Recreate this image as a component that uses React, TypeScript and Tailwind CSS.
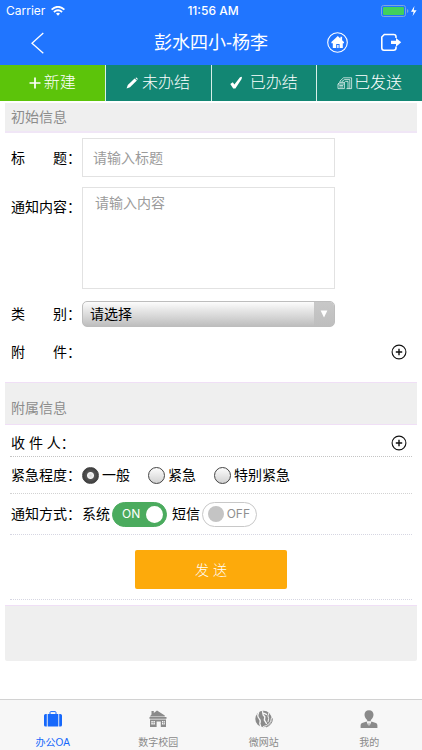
import { useState } from 'react';
import type { ReactNode } from 'react';

type TabId = 'new' | 'pending' | 'done' | 'sent';

interface TopTab {
  id: TabId;
  label: string;
  icon: ReactNode;
}

interface NavItem {
  id: string;
  label: string;
  icon: ReactNode;
}

const topTabs: TopTab[] = [
  {
    id: 'new',
    label: '新建',
    icon: (
      <svg className="w-3 h-3 mr-[3px]" viewBox="0 0 12 12" fill="none" stroke="currentColor" strokeWidth="1.7">
        <path d="M6 0.5v11M0.5 6h11" />
      </svg>
    ),
  },
  {
    id: 'pending',
    label: '未办结',
    icon: (
      <svg className="w-3 h-3 mr-1" viewBox="0 0 12 12" fill="currentColor">
        <path d="M8.6 1.5 10.9 3.6 4 10.2 0.6 11.6 1.8 8z" />
        <path d="M9.4 0.9 10.4 0.5 11.7 1.8 11.4 2.9z" />
      </svg>
    ),
  },
  {
    id: 'done',
    label: '已办结',
    icon: (
      <svg className="w-3 h-3.5 mr-2" viewBox="0 0 12 14" fill="currentColor">
        <path d="M0.3 8 2.8 6.2 4.4 8.6 10 1.2 12 0.8 11.6 3 5.4 12.6 3.2 12.6z" />
      </svg>
    ),
  },
  {
    id: 'sent',
    label: '已发送',
    icon: (
      <svg className="w-4 h-3.5 mr-px" viewBox="0 0 16 14" fill="none" stroke="currentColor" strokeWidth="0.7">
        <path d="M3 6.4V5L6.5 1.8H14.6v10.8H9.5M5 6V5.4L7.5 3.6H12.8v9M7.4 6.4 8.5 5.4H11v7.2" />
        <path d="M1 8h6.4v4.6H1zM2.3 9.5h3.8M2.3 11h3.8M1 8l1.8-1.6h4.6V8" />
      </svg>
    ),
  },
];

const navItems: NavItem[] = [
  {
    id: 'oa',
    label: '办公OA',
    icon: (
      <svg className="shrink-0 w-[18px] h-[18px]" viewBox="0 0 18 18" fill="currentColor">
        <path d="M6 4V2.6Q6 1.6 7 1.6h4q1 0 1 1V4" fill="none" stroke="currentColor" strokeWidth="1" />
        <path d="M3.7 4h10.6v12.5H3.7z" />
        <path d="M2.8 4v12.5H1.6Q0 16.5 0 15V5.5Q0 4 1.6 4zM15.2 4h1.2Q18 4 18 5.5V15q0 1.5-1.6 1.5h-1.2z" />
      </svg>
    ),
  },
  {
    id: 'campus',
    label: '数字校园',
    icon: (
      <svg className="shrink-0 w-[18px] h-[18px]" viewBox="0 0 18 18" fill="currentColor">
        <path d="M2.5 1h2.3v2L8 0.5 15.8 5.4V6.6H0.8L2.5 4.4z" />
        <path d="M0.5 7h17v1.8h-17z" />
        <path
          fillRule="evenodd"
          d="M1 9.4h16V17h-5.2v-5.6H7.6V17H1zM2.3 11v3.4h3.6V11zM13 11v3.4h2.8V11z"
        />
        <path d="M3.8 11h0.6v3.4h-0.6zM2.3 12.4h3.6v0.6H2.3zM14.1 11h0.6v3.4h-0.6zM13 12.4h2.8v0.6H13z" />
      </svg>
    ),
  },
  {
    id: 'site',
    label: '微网站',
    icon: (
      <svg className="shrink-0 w-[18px] h-[18px]" viewBox="0 0 18 18">
        <circle cx="8.5" cy="9" r="8.2" fill="currentColor" />
        <g fill="none" stroke="#f7f7f7" strokeLinecap="round">
          <path d="M3.6 2.6Q1.8 6 4 8.4q2 2 .8 5.2l1 3.2" strokeWidth="1.3" />
          <path d="M7.6 1.6 8.2 5l1.6 1.8-.4 3.4 2 3.2M9.2 3.4l2.2 1" strokeWidth="1.4" />
          <path d="M13.6 3.4q-1.4 2.6 0 5.2l-.6 3.2" strokeWidth="1" />
          <path d="M16.4 8.4q-.2 6.6-8.2 8.2" strokeWidth="0.9" />
        </g>
        <path d="M17.4 8.4Q17.4 14.8 11 17" fill="none" stroke="currentColor" strokeWidth="1" />
      </svg>
    ),
  },
  {
    id: 'me',
    label: '我的',
    icon: (
      <svg className="shrink-0 w-[18px] h-[18px]" viewBox="0 0 18 18" fill="currentColor">
        <path d="M9 0.2c2.9 0 4.5 2 4.5 4.5 0 2.1-1.3 4.1-2.7 5.3v1.2H7.2V10C5.8 8.8 4.5 6.8 4.5 4.7 4.5 2.2 6.1 0.2 9 0.2z" />
        <path d="M6.6 11.6 8.4 16 8.7 12.8h0.6L9.6 16l1.8-4.4 4.4 1.5q1.6.6 1.6 2.2V18H0.6v-2.7q0-1.6 1.6-2.2z" />
      </svg>
    ),
  },
];

const urgencyOptions = ['一般', '紧急', '特别紧急'];

function StatusBar() {
  return (
    <div className="relative flex items-center justify-between h-5 pl-1.5 pr-1 pt-0.5 font-['Inter',sans-serif] text-[12px]">
      <div className="flex items-center gap-1.5">
        <span>Carrier</span>
        <svg className="w-3.5 h-2.5" viewBox="0 0 14 10" fill="none" stroke="currentColor" strokeWidth="1.8">
          <path d="M0.6 3.6Q7-2 13.4 3.6" />
          <path d="M2.9 6Q7 2.6 11.1 6" />
          <path d="M5 7.6Q7 6 9 7.6L7 9.8z" fill="currentColor" stroke="none" />
        </svg>
      </div>
      <span className="absolute inset-x-0 pl-1 text-center font-medium">11:56 AM</span>
      <svg className="w-[37px] h-3" viewBox="0 0 37 12">
        <rect x="0.5" y="0.5" width="24" height="11" rx="2" fill="none" stroke="#7da6e0" />
        <rect x="2" y="2" width="21" height="8" rx="1" fill="#41d05c" />
        <path d="M26 4v4q1.4-.6 1.4-2T26 4z" fill="#7da6e0" />
        <path d="M33.4 1 30 6.8h2.6L31.6 11 35.6 5.2H32.8z" fill="#fff" />
      </svg>
    </div>
  );
}

function AddButton({ label }: { label: string }) {
  return (
    <button type="button" aria-label={label} className="ml-auto mr-[5px]">
      <svg className="w-4 h-4" viewBox="0 0 16 16" fill="none" stroke="#111">
        <circle cx="8" cy="8" r="6.9" strokeWidth="1.1" />
        <path d="M8 4.8v6.4M4.8 8h6.4" strokeWidth="1.4" />
      </svg>
    </button>
  );
}

interface ToggleProps {
  label: string;
  checked: boolean;
  onChange: (value: boolean) => void;
}

function Toggle({ label, checked, onChange }: ToggleProps) {
  return (
    <label className="flex items-center gap-0.5 mr-[5px]">
      {label}
      <span className="relative flex items-center w-[55px] h-[25px]">
        <input
          type="checkbox"
          checked={checked}
          onChange={e => onChange(e.target.checked)}
          className="appearance-none absolute inset-0 rounded-full border border-[#c8c8c8] bg-white checked:border-[#4bab5e] checked:bg-[#4bab5e]"
        />
        {checked ? (
          <span className="relative flex items-center justify-between w-full pl-2.5 pr-1 text-white text-[12px] font-['Inter',sans-serif] pointer-events-none">
            ON
            <span className="w-[17px] h-[17px] rounded-full bg-white" />
          </span>
        ) : (
          <span className="relative flex items-center justify-between w-full pl-1.5 pr-[7px] text-[#8f8f8f] text-[12px] font-['Inter',sans-serif] pointer-events-none">
            <span className="w-4 h-4 rounded-full bg-[#c4c4c4]" />
            OFF
          </span>
        )}
      </span>
    </label>
  );
}

export default function App() {
  const [activeTab, setActiveTab] = useState<TabId>('new');
  const [activeNav, setActiveNav] = useState('oa');
  const [title, setTitle] = useState('');
  const [content, setContent] = useState('');
  const [category, setCategory] = useState('');
  const [urgency, setUrgency] = useState('一般');
  const [systemOn, setSystemOn] = useState(true);
  const [smsOn, setSmsOn] = useState(false);

  return (
    <div className="min-h-screen flex flex-col bg-white text-black text-[14px] leading-5 font-['Liberation_Sans','Noto_Sans_CJK_SC',sans-serif]">
      {/* Header */}
      <header className="bg-[#2075ff] text-white">
        <StatusBar />
        <div className="relative flex items-center h-[45px] pl-[30px] pr-5">
          <button type="button" aria-label="返回">
            <svg className="w-[15px] h-[22px]" viewBox="0 0 15 22" fill="none" stroke="currentColor" strokeWidth="1.3">
              <path d="M13.3 1 2 11.2 13.3 21.2" />
            </svg>
          </button>
          <h1 className="absolute inset-x-0 text-center text-[18px] pointer-events-none">彭水四小-杨李</h1>
          <div className="flex items-center gap-8 ml-auto">
            <button type="button" aria-label="首页">
              <svg className="w-[21px] h-[21px]" viewBox="0 0 21 21">
                <circle cx="10.5" cy="10.5" r="9.8" fill="none" stroke="#fff" strokeWidth="1.1" />
                <path
                  fillRule="evenodd"
                  d="M4.4 10 10.8 3.9 13.4 6.4V4.8h1.7v3.4L17 10v1.2h-1.2v4.9H5.8v-4.9H4.4zM9.2 12v4.1h1V13h1.4v3.1h1V12z"
                  fill="#fff"
                />
              </svg>
            </button>
            <button type="button" aria-label="退出">
              <svg className="w-[22px] h-[19px]" viewBox="0 0 22 19" fill="none" stroke="#fff" strokeWidth="1.6">
                <path d="M16 5V3.6Q16 1.5 13.6 1.5H4.3L1.8 4v11q0 2.2 2.2 2.2h9.6q2.4 0 2.4-2.2v-1.4" />
                <path d="M11 7.7h5V4.9l5.2 4.4-5.2 4.4v-2.8h-5z" fill="#fff" stroke="none" />
              </svg>
            </button>
          </div>
        </div>
      </header>

      {/* Top tabs */}
      <nav className="grid grid-cols-4 gap-px bg-[#d8efe9] mb-0.5">
        {topTabs.map(tab => (
          <button
            key={tab.id}
            type="button"
            onClick={() => setActiveTab(tab.id)}
            className={`flex items-center justify-center h-9 text-[16px] font-light text-white ${
              activeTab === tab.id ? 'bg-[#5cc40a]' : 'bg-[#128673]'
            }`}
          >
            {tab.icon}
            {tab.label}
          </button>
        ))}
      </nav>

      <form className="flex-1 px-[5px]" onSubmit={e => e.preventDefault()}>
        {/* Basic info */}
        <h2 className="h-[30px] px-1.5 pt-1 bg-[#efefef] text-[#8c8c8c] border-b-2 border-[#f0e6f6]">初始信息</h2>

        <div className="px-[5px]">
          <div className="flex items-center pt-[5px]">
            <label htmlFor="title" className="pl-px w-[72px] shrink-0">标　　题：</label>
            <input
              id="title"
              type="text"
              placeholder="请输入标题"
              value={title}
              onChange={e => setTitle(e.target.value)}
              className="w-[63%] h-[39px] px-2.5 border border-[#e2e2e2] placeholder:text-[#9b9b9b] outline-none"
            />
          </div>

          <div className="flex items-start pt-2.5">
            <label htmlFor="content" className="pl-px pt-2.5 w-[72px] shrink-0">通知内容：</label>
            <textarea
              id="content"
              placeholder="请输入内容"
              value={content}
              onChange={e => setContent(e.target.value)}
              className="block w-[63%] h-[102px] px-3 py-[5px] border border-[#e2e2e2] placeholder:text-[#9b9b9b] outline-none resize-none"
            />
          </div>

          <div className="flex items-center pt-3">
            <label htmlFor="category" className="pl-px w-[72px] shrink-0">类　　别：</label>
            <div className="relative w-[63%]">
              <select
                id="category"
                value={category}
                onChange={e => setCategory(e.target.value)}
                className="block appearance-none w-full h-[26px] pl-[7px] pr-6 rounded-[5px] border border-[#bdbdbd] bg-linear-to-b from-[#fcfcfc] to-[#bebebe] outline-none"
              >
                <option value="">请选择</option>
              </select>
              <span className="absolute right-px inset-y-px flex items-center justify-center w-5 rounded-r bg-linear-to-b from-[#c8c8c8] to-[#bebebe] pointer-events-none">
                <svg className="w-2 h-2" viewBox="0 0 8 8" fill="#fff">
                  <path d="M0.6 0.5h6.8L4 7.5z" />
                </svg>
              </span>
            </div>
          </div>

          <div className="flex items-center h-[55px] pb-[5px]">
            <span className="pl-px">附　　件：</span>
            <AddButton label="添加附件" />
          </div>
        </div>

        {/* Additional info */}
        <h2 className="h-[43px] px-1.5 pt-[15px] bg-[#efefef] text-[#8c8c8c] border-y border-[#f0dff6]">附属信息</h2>

        <div className="px-[5px]">
          <div className="flex items-center h-8 pt-1 border-b border-dotted border-[#c4c4c4]">
            <span className="pl-px">收 件 人：</span>
            <AddButton label="添加收件人" />
          </div>

          <fieldset className="flex items-center h-[37px] border-b border-dotted border-[#d2d2d2]">
            <legend className="float-left pl-px w-[72px]">紧急程度：</legend>
            {urgencyOptions.map(option => (
              <label key={option} className="flex items-center gap-[3px] mr-[18px]">
                <input
                  type="radio"
                  name="urgency"
                  value={option}
                  checked={urgency === option}
                  onChange={() => setUrgency(option)}
                  className="appearance-none w-[17px] h-[17px] rounded-full border border-[#444] bg-linear-to-b from-[#fcfcfc] to-[#d2d2d2] checked:bg-[radial-gradient(circle,#d8d8d8_0,#f4f4f4_3px,#555_4px,#3c3c3c_8px)]"
                />
                {option}
              </label>
            ))}
          </fieldset>

          <div className="flex items-center h-[41px] border-b border-dotted border-[#d6d6e2]">
            <span className="pl-px w-[72px] shrink-0">通知方式：</span>
            <Toggle label="系统" checked={systemOn} onChange={setSystemOn} />
            <Toggle label="短信" checked={smsOn} onChange={setSmsOn} />
          </div>

          <div className="flex justify-center pt-[15px] pb-2.5 border-b border-dotted border-[#d6d6e2]">
            <button type="submit" className="w-[38%] h-[39px] rounded-xs bg-[#fdaa0b] text-white font-light">
              发 送
            </button>
          </div>
        </div>

        <div className="h-14 mt-[5px] mb-4 bg-[#efefef] border-t border-[#f0dff6] rounded-b-xs" />
      </form>

      {/* Bottom navigation */}
      <nav className="grid grid-cols-4 bg-[#f7f7f7] border-t border-[#d2d2d2]">
        {navItems.map(item => (
          <button
            key={item.id}
            type="button"
            onClick={() => setActiveNav(item.id)}
            className={`flex flex-col items-center gap-2 h-[50px] pt-2.5 text-[10px] leading-[14px] ${
              activeNav === item.id ? 'text-[#1668fb]' : 'text-[#8a8a8a]'
            }`}
          >
            {item.icon}
            <span>{item.label}</span>
          </button>
        ))}
      </nav>
    </div>
  );
}
